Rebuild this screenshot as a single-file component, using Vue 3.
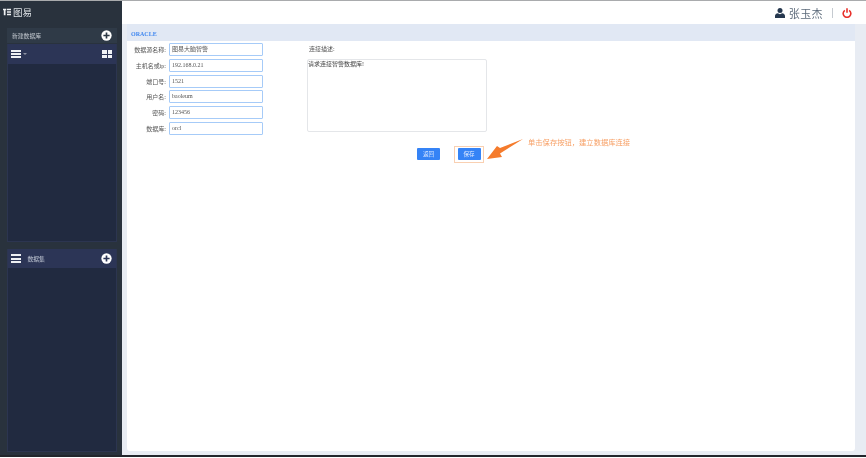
<script setup>
const fields = [
  { label: '数据源名称:', value: '图易大脑智警' },
  { label: '主机名或ip:', value: '192.168.0.21' },
  { label: '端口号:', value: '1521' },
  { label: '用户名:', value: 'baoleum' },
  { label: '密码:', value: '123456' },
  { label: '数据库:', value: 'orcl' }
]
</script>

<template>
  <div class="page">
    <div class="layout">
      <aside class="sidebar">
        <div class="logo">
          <svg class="logo-mark" viewBox="0 0 12 10" width="12" height="10">
            <path d="M0 0h5v2.2H3.8V10H1.2V2.2H0zM6 0h6v2.4H6zM6 3.8h6v2.4H6zM6 7.6h6V10H6z" fill="#eef0f2" />
          </svg>
          <span>图易</span>
        </div>
        <div class="new-bar">
          <span>新建数据库</span>
          <svg class="plus" viewBox="0 0 12 12" width="11" height="11">
            <circle cx="6" cy="6" r="5.6" fill="#fff" />
            <path d="M6 2.6v6.8M2.6 6h6.8" stroke="#2b3744" stroke-width="1.8" />
          </svg>
        </div>
        <section class="box box-top">
          <div class="box-head">
            <div class="menu-wrap">
              <div class="burger"><i></i><i></i><i></i></div>
              <span class="caret"></span>
            </div>
            <div class="tiles"><i></i><i></i><i></i><i></i></div>
          </div>
        </section>
        <section class="box box-bottom">
          <div class="box-head box-head-set">
            <div class="menu-wrap">
              <div class="burger"><i></i><i></i><i></i></div>
              <span class="set-title">数据集</span>
            </div>
            <svg class="plus" viewBox="0 0 12 12" width="11" height="11">
              <circle cx="6" cy="6" r="5.6" fill="#fff" />
              <path d="M6 2.6v6.8M2.6 6h6.8" stroke="#2c3556" stroke-width="1.8" />
            </svg>
          </div>
        </section>
      </aside>

      <div class="main">
        <header class="topbar">
          <svg class="user" viewBox="0 0 12 12" width="10" height="10">
            <circle cx="6" cy="3" r="3" fill="#26384f" />
            <path d="M0 12V9.4C0 7.6 1.6 6.4 3.4 6.2L6 7.4l2.6-1.2C10.4 6.4 12 7.6 12 9.4V12z" fill="#26384f" />
          </svg>
          <span class="user-name">张玉杰</span>
          <span class="divider"></span>
          <svg class="power" viewBox="0 0 12 12" width="10" height="10">
            <path d="M3.4 2.8a4.6 4.6 0 1 0 5.2 0" fill="none" stroke="#e8302a" stroke-width="1.9" />
            <path d="M6 .3v5.4" stroke="#e8302a" stroke-width="1.9" />
          </svg>
        </header>

        <div class="content">
          <div class="panel">
            <div class="panel-title">ORACLE</div>
            <div class="panel-body">
              <div class="form-row">
                <div class="fields">
                  <div v-for="f in fields" :key="f.label" class="field">
                    <label>{{ f.label }}</label>
                    <div class="input">{{ f.value }}</div>
                  </div>
                </div>
                <div class="desc">
                  <div class="desc-label">连接描述:</div>
                  <div class="textarea">请求连接智警数据库!</div>
                </div>
              </div>
              <div class="actions">
                <button class="btn">返回</button>
                <div class="highlight"><button class="btn">保存</button></div>
                <div class="note">
                  <svg class="arrow" viewBox="0 0 38 22" width="38" height="22">
                    <path d="M37 1L14 10 11 8 1 21 16 19 14 15.5z" fill="#f57b2c" />
                  </svg>
                  <span>单击保存按钮，建立数据库连接</span>
                </div>
              </div>
            </div>
          </div>
        </div>
      </div>
    </div>
    <div class="bottom-line"></div>
  </div>
</template>

<style scoped>
.page {
  width: 866px;
  height: 458px;
  display: flex;
  flex-direction: column;
  overflow: hidden;
  background: #fff;
  font-family: "Liberation Serif", "Noto Sans CJK SC", serif;
  border-top: 1px solid #a9abad;
  box-sizing: border-box;
  filter: blur(0.3px);
}

.layout {
  flex: 1;
  display: flex;
  min-height: 0;
}

.sidebar {
  width: 122px;
  background: #29323d;
  padding: 0 5px 3px 7px;
  box-sizing: border-box;
  display: flex;
  flex-direction: column;
}

.logo {
  height: 22px;
  padding-bottom: 1px;
  margin-left: -4px;
  display: flex;
  align-items: center;
  gap: 2px;
  color: #dfe3e7;
  font-family: "Noto Sans CJK SC", sans-serif;
  font-size: 9.5px;
}

.logo-mark {
  width: 8px;
  height: 8px;
}

.new-bar {
  height: 15px;
  margin-top: 4px;
  padding: 0 5px;
  background: #2f3a47;
  display: flex;
  align-items: center;
  justify-content: space-between;
  color: #c3c9d0;
  font-size: 5.8px;
  font-family: "Noto Sans CJK SC", sans-serif;
}

.box {
  background: #212a40;
  border: 1px solid #2c3550;
  border-top: none;
  box-sizing: border-box;
  margin-top: 1px;
}

.box-top {
  height: 198px;
}

.box-bottom {
  flex: 1;
  margin-top: 7px;
}

.box-head {
  height: 20px;
  background: #2c3556;
  padding: 0 1px 0 3px;
  display: flex;
  align-items: center;
  justify-content: space-between;
}

.box-head-set {
  height: 19px;
  padding-right: 4px;
}

.menu-wrap {
  display: flex;
  align-items: center;
  gap: 2px;
}

.burger {
  width: 9.5px;
  display: flex;
  flex-direction: column;
  gap: 1.2px;
}

.burger i {
  display: block;
  height: 2px;
  background: #eef0f4;
}

.caret {
  border: 2px solid transparent;
  border-top-color: #8d93a4;
  margin-top: 2px;
}

.set-title {
  margin-left: 5px;
  color: #c3c9d6;
  font-size: 5.8px;
  font-family: "Noto Sans CJK SC", sans-serif;
}

.tiles {
  width: 10px;
  height: 8px;
  margin-right: 3px;
  display: grid;
  grid-template-columns: 1fr 1fr;
  gap: 1px;
}

.tiles i {
  background: #f0f2f6;
}

.main {
  flex: 1;
  min-width: 0;
  display: flex;
  flex-direction: column;
}

.topbar {
  height: 23px;
  flex: none;
  display: flex;
  align-items: center;
  justify-content: flex-end;
  padding-right: 14px;
}

.user {
  margin-right: 4px;
}

.user-name {
  color: #5d6b7b;
  font-size: 11px;
  letter-spacing: 0.4px;
}

.divider {
  width: 1px;
  height: 10px;
  background: #c5cad0;
  margin: 0 9px;
}

.content {
  flex: 1;
  min-height: 0;
  background: #e8ecf3;
  padding: 0 11px 4px 5px;
  display: flex;
}

.panel {
  flex: 1;
  display: flex;
  flex-direction: column;
}

.panel-title {
  height: 17px;
  flex: none;
  background: #e1e8f4;
  color: #3f87f0;
  font-size: 6px;
  font-weight: bold;
  line-height: 21px;
  padding-left: 4px;
}

.panel-body {
  flex: 1;
  background: #fff;
  border-radius: 0 0 3px 3px;
}

.form-row {
  display: flex;
}

.fields {
  width: 136px;
  padding-top: 2px;
  display: flex;
  flex-direction: column;
  gap: 2.8px;
}

.field {
  display: flex;
  align-items: center;
  height: 13px;
}

.field label {
  width: 39px;
  margin-right: 3px;
  text-align: right;
  color: #555;
  font-size: 6px;
  white-space: nowrap;
}

.input {
  width: 94px;
  height: 13px;
  box-sizing: border-box;
  border: 1.5px solid #a6cbf8;
  border-radius: 1px;
  padding-left: 2px;
  color: #555;
  font-size: 6px;
  line-height: 10px;
  white-space: nowrap;
}

.desc {
  margin-left: 44px;
}

.desc-label {
  margin: 3px 0 0 2px;
  height: 15px;
  color: #555;
  font-size: 6px;
}

.textarea {
  width: 180px;
  height: 73px;
  box-sizing: border-box;
  border: 1.5px solid #e4e6e9;
  border-radius: 2px;
  color: #444;
  font-size: 6px;
  line-height: 8px;
}

.actions {
  margin: 10px 0 0 290px;
  height: 19px;
  display: flex;
  align-items: center;
}

.btn {
  width: 23px;
  height: 12px;
  padding: 0;
  border: none;
  border-radius: 1px;
  background: #3583f6;
  color: #dfeaff;
  font-size: 5.5px;
  font-family: "Noto Sans CJK SC", sans-serif;
}

.highlight {
  width: 30px;
  height: 17px;
  margin-left: 14px;
  box-sizing: border-box;
  border: 1.5px solid #f9d0b2;
  display: flex;
  align-items: center;
  justify-content: center;
}

.note {
  position: relative;
  height: 19px;
  margin-left: 44px;
  color: #f7a066;
  font-size: 7.3px;
  font-family: "Noto Sans CJK SC", sans-serif;
  white-space: nowrap;
}

.note span {
  position: absolute;
  top: -8px;
  left: 0;
}

.arrow {
  position: absolute;
  left: -42px;
  top: -7px;
}

.bottom-line {
  height: 2px;
  background: #22262c;
  flex: none;
  margin-bottom: 1px;
}
</style>
